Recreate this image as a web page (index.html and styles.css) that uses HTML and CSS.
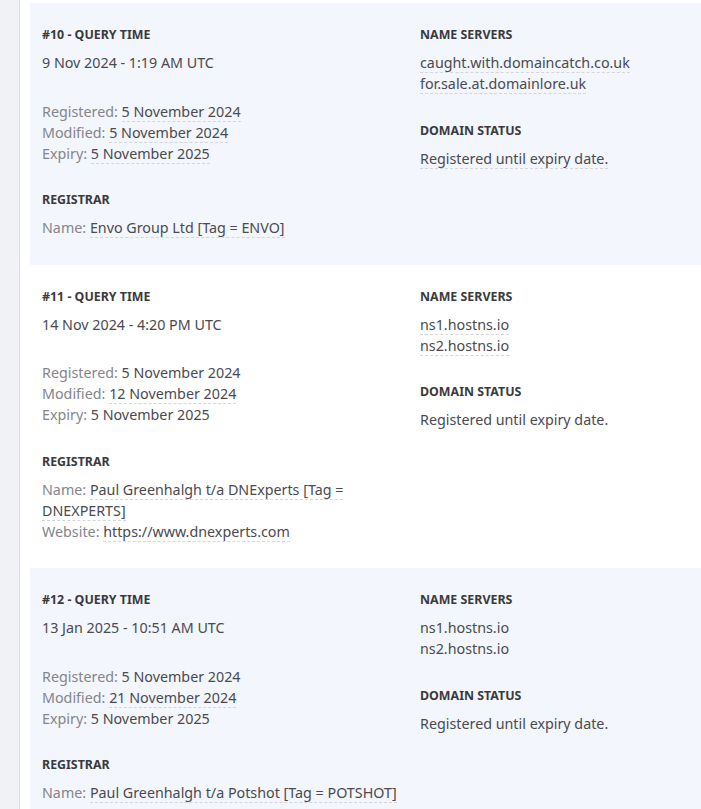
FILE: index.html
```html
<!DOCTYPE html>
<html lang="en">
<head>
<meta charset="utf-8">
<title>Whois history</title>
<link rel="stylesheet" href="styles.css">
</head>
<body>
<div class="layout">
  <aside class="side"></aside>
  <main class="main">
    <section class="card alt">
      <div class="col">
        <div class="block">
          <h3 class="label">#10 - Query Time</h3>
          <div class="line">9 Nov 2024 - 1:19 AM UTC</div>
        </div>
        <div class="block">
          <div class="line"><span class="key">Registered:</span> <span class="chg">5 November 2024</span></div>
          <div class="line"><span class="key">Modified:</span> <span class="chg">5 November 2024</span></div>
          <div class="line"><span class="key">Expiry:</span> <span class="chg">5 November 2025</span></div>
        </div>
        <div class="block">
          <h3 class="label">Registrar</h3>
          <div class="line"><span class="key">Name:</span> <span class="chg">Envo Group Ltd [Tag = ENVO]</span></div>
        </div>
      </div>
      <div class="col">
        <div class="block">
          <h3 class="label">Name Servers</h3>
          <div class="line"><span class="chg">caught.with.domaincatch.co.uk</span></div>
          <div class="line"><span class="chg">for.sale.at.domainlore.uk</span></div>
        </div>
        <div class="block">
          <h3 class="label">Domain Status</h3>
          <div class="line"><span class="chg">Registered until expiry date.</span></div>
        </div>
      </div>
    </section>

    <section class="card">
      <div class="col">
        <div class="block">
          <h3 class="label">#11 - Query Time</h3>
          <div class="line">14 Nov 2024 - 4:20 PM UTC</div>
        </div>
        <div class="block">
          <div class="line"><span class="key">Registered:</span> 5 November 2024</div>
          <div class="line"><span class="key">Modified:</span> <span class="chg">12 November 2024</span></div>
          <div class="line"><span class="key">Expiry:</span> 5 November 2025</div>
        </div>
        <div class="block">
          <h3 class="label">Registrar</h3>
          <div class="line"><span class="key">Name:</span> <span class="chg">Paul Greenhalgh t/a DNExperts [Tag = DNEXPERTS]</span></div>
          <div class="line"><span class="key">Website:</span> <span class="chg">https://www.dnexperts.com</span></div>
        </div>
      </div>
      <div class="col">
        <div class="block">
          <h3 class="label">Name Servers</h3>
          <div class="line"><span class="chg">ns1.hostns.io</span></div>
          <div class="line"><span class="chg">ns2.hostns.io</span></div>
        </div>
        <div class="block">
          <h3 class="label">Domain Status</h3>
          <div class="line">Registered until expiry date.</div>
        </div>
      </div>
    </section>

    <section class="card alt">
      <div class="col">
        <div class="block">
          <h3 class="label">#12 - Query Time</h3>
          <div class="line">13 Jan 2025 - 10:51 AM UTC</div>
        </div>
        <div class="block">
          <div class="line"><span class="key">Registered:</span> 5 November 2024</div>
          <div class="line"><span class="key">Modified:</span> <span class="chg">21 November 2024</span></div>
          <div class="line"><span class="key">Expiry:</span> 5 November 2025</div>
        </div>
        <div class="block">
          <h3 class="label">Registrar</h3>
          <div class="line"><span class="key">Name:</span> <span class="chg">Paul Greenhalgh t/a Potshot [Tag = POTSHOT]</span></div>
        </div>
      </div>
      <div class="col">
        <div class="block">
          <h3 class="label">Name Servers</h3>
          <div class="line">ns1.hostns.io</div>
          <div class="line">ns2.hostns.io</div>
        </div>
        <div class="block">
          <h3 class="label">Domain Status</h3>
          <div class="line">Registered until expiry date.</div>
        </div>
      </div>
    </section>
  </main>
</div>
</body>
</html>
```

FILE: styles.css
```css
html, body {
  margin: 0;
  padding: 0;
  background: #ffffff;
}

body {
  font-family: "Noto Sans", "Open Sans", sans-serif;
  font-size: 14.3px;
  color: #4a4a4f;
}

.layout {
  display: flex;
  min-height: 809px;
}

.side {
  flex: 0 0 19px;
  background: #f1f2f5;
  border-right: 1px solid #dcdee2;
}

.main {
  flex: 1;
  padding: 3px 0 0 10px;
  min-width: 0;
}

.card {
  display: grid;
  grid-template-columns: 370px 1fr;
  column-gap: 8px;
  padding: 23px 12px 26.5px 12px;
  background: #ffffff;
}

.card.alt {
  background: #f3f6fc;
}

.col {
  display: flex;
  flex-direction: column;
  gap: 27.5px;
}

.label {
  margin: 0 0 8px 0;
  font-size: 12.4px;
  line-height: 18px;
  font-weight: 700;
  text-transform: uppercase;
  color: #3a3a3e;
}

.line {
  line-height: 21px;
  color: #4a4a4f;
}

.key {
  color: #85858a;
}

.chg {
  border-bottom: 1px dashed #d3d6dc;
}
```
